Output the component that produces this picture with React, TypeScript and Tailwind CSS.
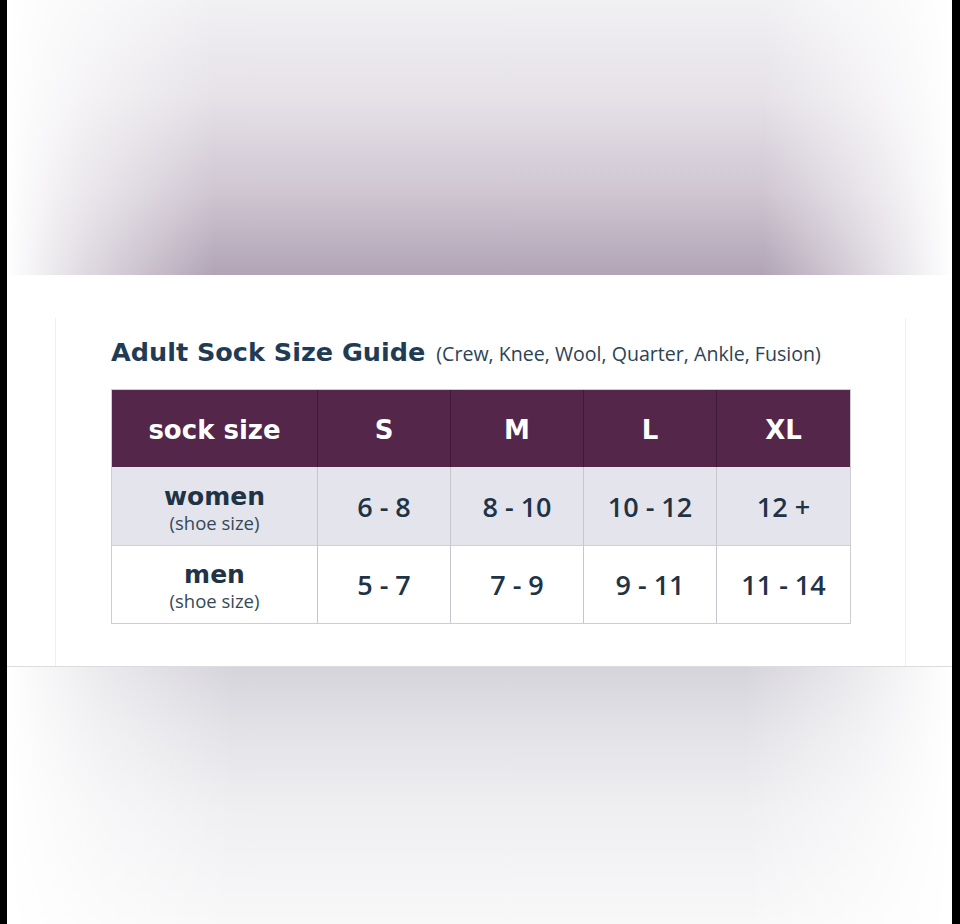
import React from "react";

const sizes = ["S", "M", "L", "XL"];

const rows = [
  { label: "women", values: ["6 - 8", "8 - 10", "10 - 12", "12 +"], shaded: true },
  { label: "men", values: ["5 - 7", "7 - 9", "9 - 11", "11 - 14"], shaded: false },
];

const bold = "font-['DejaVu_Sans','Liberation_Sans',sans-serif] font-bold";

const App = () => {
  return (
    <div className="flex h-[924px] w-[960px] bg-black font-['Open_Sans','Liberation_Sans',sans-serif]">
      <div className="ml-[7px] flex w-[945px] flex-col bg-white">
        {/* blurred top of the photo */}
        <div className="h-[275px] bg-[linear-gradient(to_right,#ffffff_0%,rgba(255,255,255,0.6)_8%,rgba(255,255,255,0)_22%,rgba(255,255,255,0)_80%,rgba(255,255,255,0.6)_92%,#ffffff_100%),linear-gradient(to_bottom,#f1f0f3_0%,#e6e2e8_35%,#cfc6d2_70%,#b1a4b6_100%)]" />

        {/* size guide */}
        <div className="flex h-[392px] border-b border-[#dcdcdf] bg-white px-12 pt-[43px]">
          <div className="flex flex-1 flex-col border-x border-[#eef0f0] pl-[55px] pr-[54px]">
            <div className="flex items-baseline gap-[11px] pt-[22px]">
              <h1 className={`${bold} text-[25.5px] leading-none text-[#1f3c54]`}>
                Adult Sock Size Guide
              </h1>
              <span className="text-[19.6px] leading-none text-[#2c4356]">
                (Crew, Knee, Wool, Quarter, Ankle, Fusion)
              </span>
            </div>

            <div className="mt-[23px] border border-[#cdcdd2]">
              <div className={`flex h-[77px] bg-[#53264a] text-white ${bold}`}>
                <div className="flex w-[206px] items-center justify-center border-r border-[#3f1a37] pt-[4px] text-[26px]">
                  sock size
                </div>
                {sizes.map((s, i) => (
                  <div
                    key={s}
                    className={`flex w-[133px] items-center justify-center pt-[4px] text-[26px] ${
                      i < sizes.length - 1 ? "border-r border-[#3f1a37]" : ""
                    }`}
                  >
                    {s}
                  </div>
                ))}
              </div>
              {rows.map((r, ri) => (
                <div
                  key={r.label}
                  className={`flex h-[78px] text-[#1e3446] ${r.shaded ? "bg-[#e4e4ec]" : "bg-white"} ${
                    ri > 0 ? "border-t border-[#cfcfd4]" : ""
                  }`}
                >
                  <div className="flex w-[206px] flex-col items-center justify-center border-r border-[#c6c6cc] pt-[7px]">
                    <span className={`${bold} text-[25px] leading-[27px]`}>{r.label}</span>
                    <span className="text-[18.5px] leading-[26px] text-[#33495a]">(shoe size)</span>
                  </div>
                  {r.values.map((v, i) => (
                    <div
                      key={i}
                      className={`flex w-[133px] items-center justify-center pt-[3px] text-[27px] font-semibold ${
                        i < r.values.length - 1 ? "border-r border-[#c6c6cc]" : ""
                      }`}
                    >
                      {v}
                    </div>
                  ))}
                </div>
              ))}
            </div>
          </div>
        </div>

        {/* blurred bottom of the photo */}
        <div className="flex-1 bg-[linear-gradient(to_right,#ffffff_0%,rgba(255,255,255,0.5)_10%,rgba(255,255,255,0)_24%,rgba(255,255,255,0)_78%,rgba(255,255,255,0.5)_90%,#ffffff_100%),linear-gradient(to_bottom,#d6d4db_0%,#e3e2e7_25%,#efeff2_55%,#f8f8f9_100%)]" />
      </div>
      <div className="w-[8px] bg-black" />
    </div>
  );
};

export default App;
